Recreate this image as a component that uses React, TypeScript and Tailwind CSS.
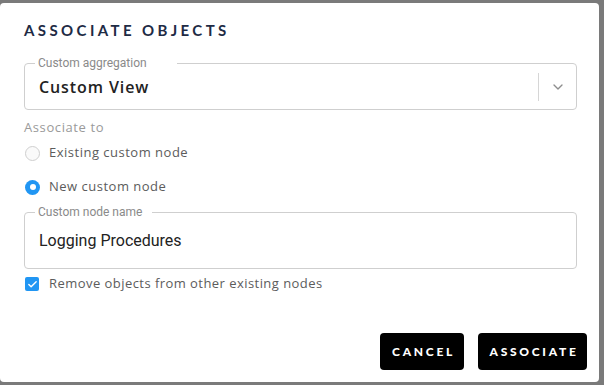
import { ChevronDown, Check } from 'lucide-react'

const ui = { fontFamily: 'Lato, "Open Sans", sans-serif' }
const body = { fontFamily: '"Open Sans", Lato, sans-serif' }
const rob = { fontFamily: 'Roboto, "Liberation Sans", Arial, sans-serif' }

function Outlined({
  label,
  notch,
  height,
  children,
}: {
  label: string
  notch: string
  height: string
  children: React.ReactNode
}) {
  return (
    <div className={`relative w-[553px] ${height} rounded-[4px] border border-[#cfcfcf]`}>
      <span
        className={`absolute left-[10px] top-[-9px] ${notch} bg-white pl-[3px] text-[12px] leading-[16px] text-[#8a8a8a]`}
        style={rob}
      >
        {label}
      </span>
      {children}
    </div>
  )
}

export default function App() {
  return (
    <div className="w-[604px] h-[385px] overflow-hidden bg-[#7a7a7a] pt-[3px]">
      <div className="flex h-[379px] w-[599px] flex-col rounded-[4px] bg-white px-6" style={ui}>
        <h2 className="mt-[17px] h-5 text-[15px] font-bold leading-5 tracking-[3.4px] text-[#1e2b45]">
          ASSOCIATE OBJECTS
        </h2>

        <div className="mt-[23px]">
          <Outlined label="Custom aggregation" notch="w-[142px]" height="h-[47px]">
            <div className="flex h-full items-center">
              <span
                className="flex-1 pl-[14px] text-[16px] font-semibold tracking-[0.9px] text-[#222]"
                style={body}
              >
                Custom View
              </span>
              <span className="h-[28px] w-px bg-[#d6d6d6]" />
              <span className="flex w-[37px] justify-center text-[#8d8d8d]">
                <ChevronDown size={16} strokeWidth={2} />
              </span>
            </div>
          </Outlined>
        </div>

        <div className="mt-[9px] h-4 text-[13px] leading-4 tracking-[0.6px] text-[#9a9a9a]" style={body}>
          Associate to
        </div>

        <label className="mt-[8px] flex h-5 items-center gap-[9px]" style={body}>
          <span className="ml-px h-[15px] w-[15px] rounded-full border border-[#cfcfcf] bg-[#fafafa]" />
          <span className="text-[13px] tracking-[0.5px] text-[#5c5c5c]">Existing custom node</span>
        </label>

        <label className="mt-[14px] flex h-5 items-center gap-[9px]" style={body}>
          <span className="ml-px flex h-[15px] w-[15px] items-center justify-center rounded-full bg-[#2196f3]">
            <span className="h-[6px] w-[6px] rounded-full bg-white" />
          </span>
          <span className="text-[13px] tracking-[0.5px] text-[#5c5c5c]">New custom node</span>
        </label>

        <div className="mt-[15px]">
          <Outlined label="Custom node name" notch="w-[117px]" height="h-[57px]">
            <div className="flex h-full items-center pl-[14px] text-[16px] text-[#222]" style={rob}>
              Logging Procedures
            </div>
          </Outlined>
        </div>

        <label className="mt-[7px] flex h-4 items-center gap-[10px]" style={body}>
          <span className="ml-px flex h-[14px] w-[14px] items-center justify-center rounded-[2px] bg-[#2196f3] text-white">
            <Check size={11} strokeWidth={3} />
          </span>
          <span className="text-[13px] tracking-[0.45px] text-[#5c5c5c]">
            Remove objects from other existing nodes
          </span>
        </label>

        <div className="mt-[41px] mr-[-12px] flex justify-end gap-[14px]">
          <button className="h-[37px] w-[84px] rounded-[4px] bg-black pl-[3px] text-[12px] font-black tracking-[2.7px] text-white">
            CANCEL
          </button>
          <button className="h-[37px] w-[109px] rounded-[4px] bg-black pl-[3px] text-[12px] font-black tracking-[2.7px] text-white">
            ASSOCIATE
          </button>
        </div>
      </div>
    </div>
  )
}
